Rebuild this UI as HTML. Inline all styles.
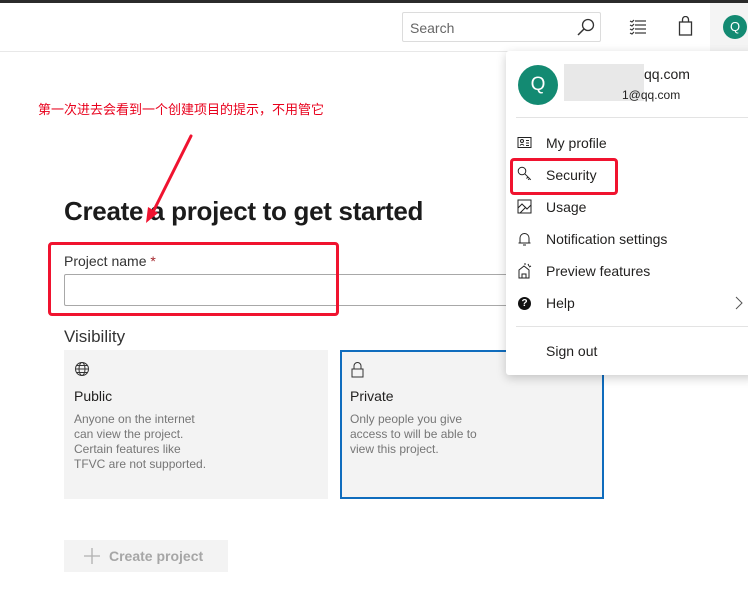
<!DOCTYPE html>
<html><head><meta charset="utf-8"><style>
*{box-sizing:border-box;margin:0;padding:0}
body{width:748px;height:607px;overflow:hidden;background:#fff;font-family:"Liberation Sans","Noto Sans CJK SC",sans-serif;color:#201f1e;position:relative}
.abs{position:absolute}
.mi{position:absolute;left:546px;font-size:14px;color:#201f1e}
.ic{position:absolute;left:517px}
.card{position:absolute;top:350px;width:264px;height:149px;background:#f3f3f3;padding:0 10px}
.card h4{position:absolute;left:10px;top:38px;font-weight:normal;font-size:14px;color:#201f1e}
.card p{position:absolute;left:10px;top:62px;font-size:12px;line-height:15px;color:#767676}
</style></head><body>
<div class="abs" style="left:0;top:0;width:748px;height:3px;background:#2b2b2b"></div>
<div class="abs" style="left:0;top:51px;width:748px;height:1px;background:#e8e8e8"></div>
<div class="abs" style="left:402px;top:12px;width:199px;height:30px;border:1px solid #dcdcdc;border-radius:2px;font-size:14px;color:#666;padding:7px 7px">Search</div>
<svg class="abs" style="left:576px;top:17px" width="20" height="20"><circle cx="12" cy="8" r="5.5" fill="none" stroke="#333" stroke-width="1.3"/><line x1="8" y1="12" x2="2" y2="18" stroke="#333" stroke-width="1.5"/></svg>
<svg class="abs" style="left:629px;top:19px" width="18" height="16"><g stroke="#333" stroke-width="1.2"><line x1="6" y1="2" x2="17" y2="2"/><line x1="6" y1="6" x2="17" y2="6"/><line x1="6" y1="10" x2="17" y2="10"/><line x1="6" y1="14" x2="17" y2="14"/><path d="M1 2l2 1 2-2M1 6l2 1 2-2M1 10l2 1 2-2M1 14l2 1 2-2" fill="none"/></g></svg>
<svg class="abs" style="left:678px;top:16px" width="16" height="20"><rect x="1.5" y="6" width="12" height="13" fill="none" stroke="#333" stroke-width="1.3"/><path d="M4.5 6V3.5a3 3 0 0 1 6 0V6" fill="none" stroke="#333" stroke-width="1.3"/></svg>
<div class="abs" style="left:710px;top:3px;width:38px;height:48px;background:#f4f4f4"></div>
<div class="abs" style="left:723px;top:15px;width:24px;height:24px;border-radius:50%;background:#138a72;color:#fff;font-size:13px;text-align:center;line-height:24px">Q</div>

<div class="abs" style="left:38px;top:99px;font-size:13px;color:#e8001c">第一次进去会看到一个创建项目的提示，不用管它</div>

<div class="abs" style="left:64px;top:196px;font-size:26px;font-weight:bold;letter-spacing:-0.3px;color:#1b1b1b">Create a project to get started</div>
<div class="abs" style="left:64px;top:253px;font-size:14px;color:#333">Project name <span style="color:#a4262c">*</span></div>
<div class="abs" style="left:64px;top:274px;width:460px;height:32px;border:1px solid #a8a8a8;border-radius:2px"></div>
<div class="abs" style="left:64px;top:327px;font-size:17px;color:#333">Visibility</div>
<div class="card" style="left:64px">
<svg class="abs" style="left:10px;top:11px" width="16" height="16"><g fill="none" stroke="#333" stroke-width="1"><circle cx="8" cy="8" r="6.5"/><ellipse cx="8" cy="8" rx="3" ry="6.5"/><line x1="1.5" y1="8" x2="14.5" y2="8"/><line x1="2.5" y1="4.5" x2="13.5" y2="4.5"/><line x1="2.5" y1="11.5" x2="13.5" y2="11.5"/></g></svg>
<h4>Public</h4><p>Anyone on the internet<br>can view the project.<br>Certain features like<br>TFVC are not supported.</p></div>
<div class="card" style="left:340px;border:2px solid #0f6cbd">
<svg class="abs" style="left:8px;top:8px" width="16" height="20"><rect x="2" y="9" width="11" height="8" fill="none" stroke="#333"/><path d="M4 9V6a3.5 3.5 0 0 1 7 0v3" fill="none" stroke="#333"/></svg>
<h4 style="left:8px;top:36px">Private</h4><p style="left:8px;top:60px">Only people you give<br>access to will be able to<br>view this project.</p></div>
<div class="abs" style="left:64px;top:540px;width:164px;height:32px;background:#f3f3f3;font-size:14px;font-weight:bold;color:#a6a6a6;padding:8px 0 0 45px">Create project</div>
<svg class="abs" style="left:83px;top:547px" width="18" height="18"><path d="M9 1v16M1 9h16" stroke="#b0b0b0" stroke-width="1.3"/></svg>

<div class="abs" style="left:506px;top:51px;width:250px;height:324px;background:#fff;box-shadow:0 3px 10px rgba(0,0,0,.2);border-radius:3px"></div>
<div class="abs" style="left:518px;top:65px;width:40px;height:40px;border-radius:50%;background:#138a72;color:#fff;font-size:19px;text-align:center;line-height:40px">Q</div>
<div class="abs" style="left:564px;top:64px;width:80px;height:37px;background:#e8e8e8"></div>
<div class="abs" style="left:644px;top:66px;font-size:14px">qq.com</div>
<div class="abs" style="left:622px;top:88px;font-size:12px">1@qq.com</div>
<div class="abs" style="left:516px;top:117px;width:232px;height:1px;background:#e3e3e3"></div>
<svg class="ic" style="top:136px" width="16" height="14"><rect x="1" y="1.5" width="13" height="10" fill="none" stroke="#222"/><circle cx="5" cy="5" r="1.5" fill="none" stroke="#222"/><path d="M3 9.5q2-2.5 4 0M9 4.5h3M9 7h3M9 9.5h3" fill="none" stroke="#222"/></svg>
<div class="mi" style="top:135px">My profile</div>
<svg class="ic" style="top:166px" width="16" height="16"><circle cx="5" cy="5" r="3.8" fill="none" stroke="#222"/><path d="M7.8 7.8l6 6M11 11l-1.5 1.5M12.5 12.5l-1.3 1.3" fill="none" stroke="#222"/></svg>
<div class="mi" style="top:167px">Security</div>
<svg class="ic" style="top:199px" width="16" height="16"><rect x="1" y="1" width="13" height="13" fill="none" stroke="#222"/><path d="M1 9l4-4 5 5 4-4M3 14l6-6" fill="none" stroke="#222"/></svg>
<div class="mi" style="top:199px">Usage</div>
<svg class="ic" style="top:231px" width="16" height="16"><path d="M3 12V7a4.5 4.5 0 0 1 9 0v5zM1.5 12h12M6 14h3" fill="none" stroke="#222"/></svg>
<div class="mi" style="top:231px">Notification settings</div>
<svg class="ic" style="top:262px" width="16" height="17"><path d="M2 8l5-4 5 4v8H2zM5 16v-4h4v4M11 2l1 2M14 4l-2 1M8 1v2" fill="none" stroke="#222"/></svg>
<div class="mi" style="top:263px">Preview features</div>
<div class="abs" style="left:518px;top:297px;width:13px;height:13px;border-radius:50%;background:#111;color:#fff;font-size:10px;font-weight:bold;text-align:center;line-height:13px">?</div>
<div class="mi" style="top:295px">Help</div>
<svg class="abs" style="left:735px;top:296px" width="8" height="14"><path d="M1 1l6 6-6 6" fill="none" stroke="#555"/></svg>
<div class="abs" style="left:516px;top:326px;width:232px;height:1px;background:#e3e3e3"></div>
<div class="mi" style="top:343px">Sign out</div>

<div class="abs" style="left:48px;top:242px;width:291px;height:74px;border:3px solid #f0132f;border-radius:4px"></div>
<div class="abs" style="left:510px;top:158px;width:108px;height:37px;border:3px solid #f0132f;border-radius:4px"></div>
<svg class="abs" style="left:0;top:0" width="748" height="607"><line x1="191" y1="136" x2="153" y2="212" stroke="#f0132f" stroke-width="3" stroke-linecap="round"/><path d="M146 223l2-16 10 6z" fill="#f0132f"/></svg>
</body></html>
